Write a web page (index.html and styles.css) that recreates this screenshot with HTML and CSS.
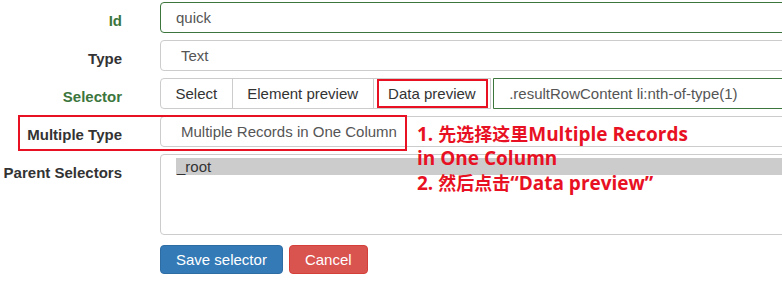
FILE: index.html
```html
<!DOCTYPE html>
<html lang="zh-CN">

<head>
  <meta charset="UTF-8">
  <meta name="viewport" content="width=device-width, initial-scale=1.0">
  <title>Edit selector</title>
  <link rel="stylesheet" href="styles.css">
</head>

<body>
  <form class="form-horizontal">
    <div class="form-row has-success">
      <label class="control-label" for="selectorId">Id</label>
      <input class="form-control" id="selectorId" type="text" value="quick">
    </div>

    <div class="form-row">
      <label class="control-label" for="selectorType">Type</label>
      <select class="form-control" id="selectorType">
        <option>Text</option>
      </select>
    </div>

    <div class="form-row has-success">
      <label class="control-label">Selector</label>
      <div class="input-group">
        <button type="button" class="btn btn-default">Select</button>
        <button type="button" class="btn btn-default">Element preview</button>
        <button type="button" class="btn btn-default marked">Data preview<span class="mark"></span></button>
        <input class="form-control" type="text" value=".resultRowContent li:nth-of-type(1)">
      </div>
    </div>

    <div class="form-row">
      <label class="control-label" for="multipleType">Multiple Type</label>
      <select class="form-control" id="multipleType">
        <option>Multiple Records in One Column</option>
      </select>
    </div>

    <div class="form-row">
      <label class="control-label">Parent Selectors</label>
      <div class="form-control parent-list">
        <div class="option selected">_root</div>
      </div>
    </div>

    <div class="form-row">
      <span></span>
      <div class="actions">
        <button type="button" class="btn btn-primary">Save selector</button>
        <button type="button" class="btn btn-danger">Cancel</button>
      </div>
    </div>
  </form>

  <!-- annotations drawn over the screenshot -->
  <div class="mark-box"></div>
  <div class="note">
    1. <span class="cjk">先选择这里</span>Multiple Records<br>
    in One Column<br>
    2. <span class="cjk">然后点击</span>“Data preview”
  </div>
</body>

</html>
```

FILE: styles.css
```css
body {
  margin: 0;
  padding-top: 2px;
  font-family: "Liberation Sans", Arial, sans-serif;
  font-size: 15px;
  color: #333;
  background: #fff;
  overflow: hidden;
  position: relative;
  height: 287px;
}

.form-row {
  display: grid;
  grid-template-columns: 122px 720px;
  column-gap: 38px;
  margin-bottom: 7px;
}

.control-label {
  text-align: right;
  font-weight: bold;
  padding-top: 9px;
  line-height: 20px;
  white-space: nowrap;
}

.has-success .control-label {
  color: #3c763d;
}

.form-control {
  box-sizing: border-box;
  height: 31px;
  width: 100%;
  padding: 0 15px;
  border: 1px solid #ccc;
  border-radius: 4px;
  font-family: inherit;
  font-size: 15px;
  color: #555;
  background: #fff;
  outline: none;
}

select.form-control {
  appearance: none;
  padding-left: 20px;
}

.has-success .form-control {
  border-color: #3c763d;
}

.input-group {
  display: flex;
}

.input-group .btn {
  margin-left: -1px;
  border-radius: 0;
  padding: 0 14.5px;
}

.input-group .btn:first-child {
  margin-left: 0;
  border-radius: 4px 0 0 4px;
}

.input-group .form-control {
  border-radius: 0 4px 4px 0;
  flex: 1;
  margin-left: 2px;
}

.btn {
  box-sizing: border-box;
  height: 31px;
  padding: 0 15px;
  border: 1px solid #ccc;
  border-radius: 4px;
  font-family: inherit;
  font-size: 15px;
  background: #fff;
  color: #333;
  white-space: nowrap;
  cursor: pointer;
}

.marked {
  position: relative;
}

.mark {
  position: absolute;
  top: 0;
  bottom: 0;
  left: 3px;
  right: 2px;
  border: 2px solid #e81123;
}

.parent-list {
  height: 81px;
  padding: 3px 0 0 15px;
}

.option {
  height: 17px;
  line-height: 17px;
  padding-left: 1px;
  color: #333;
}

.option.selected {
  background: #ccc;
}

.actions {
  display: flex;
  gap: 6px;
  padding-top: 3px;
}

.actions .btn {
  height: 29px;
  color: #fff;
}

.btn-primary {
  background: #337ab7;
  border-color: #2e6da4;
}

.btn-danger {
  background: #d9534f;
  border-color: #d43f3a;
}

.mark-box {
  position: absolute;
  left: 18px;
  top: 115px;
  width: 385px;
  height: 32px;
  border: 2px solid #e81123;
}

.note {
  position: absolute;
  left: 417px;
  top: 121px;
  font-family: "Open Sans", "Noto Sans CJK SC", sans-serif;
  font-weight: bold;
  font-size: 19px;
  line-height: 24px;
  color: #e81123;
  white-space: nowrap;
}

.note .cjk {
  font-family: "Noto Sans CJK SC", sans-serif;
  font-size: 18px;
}
```
